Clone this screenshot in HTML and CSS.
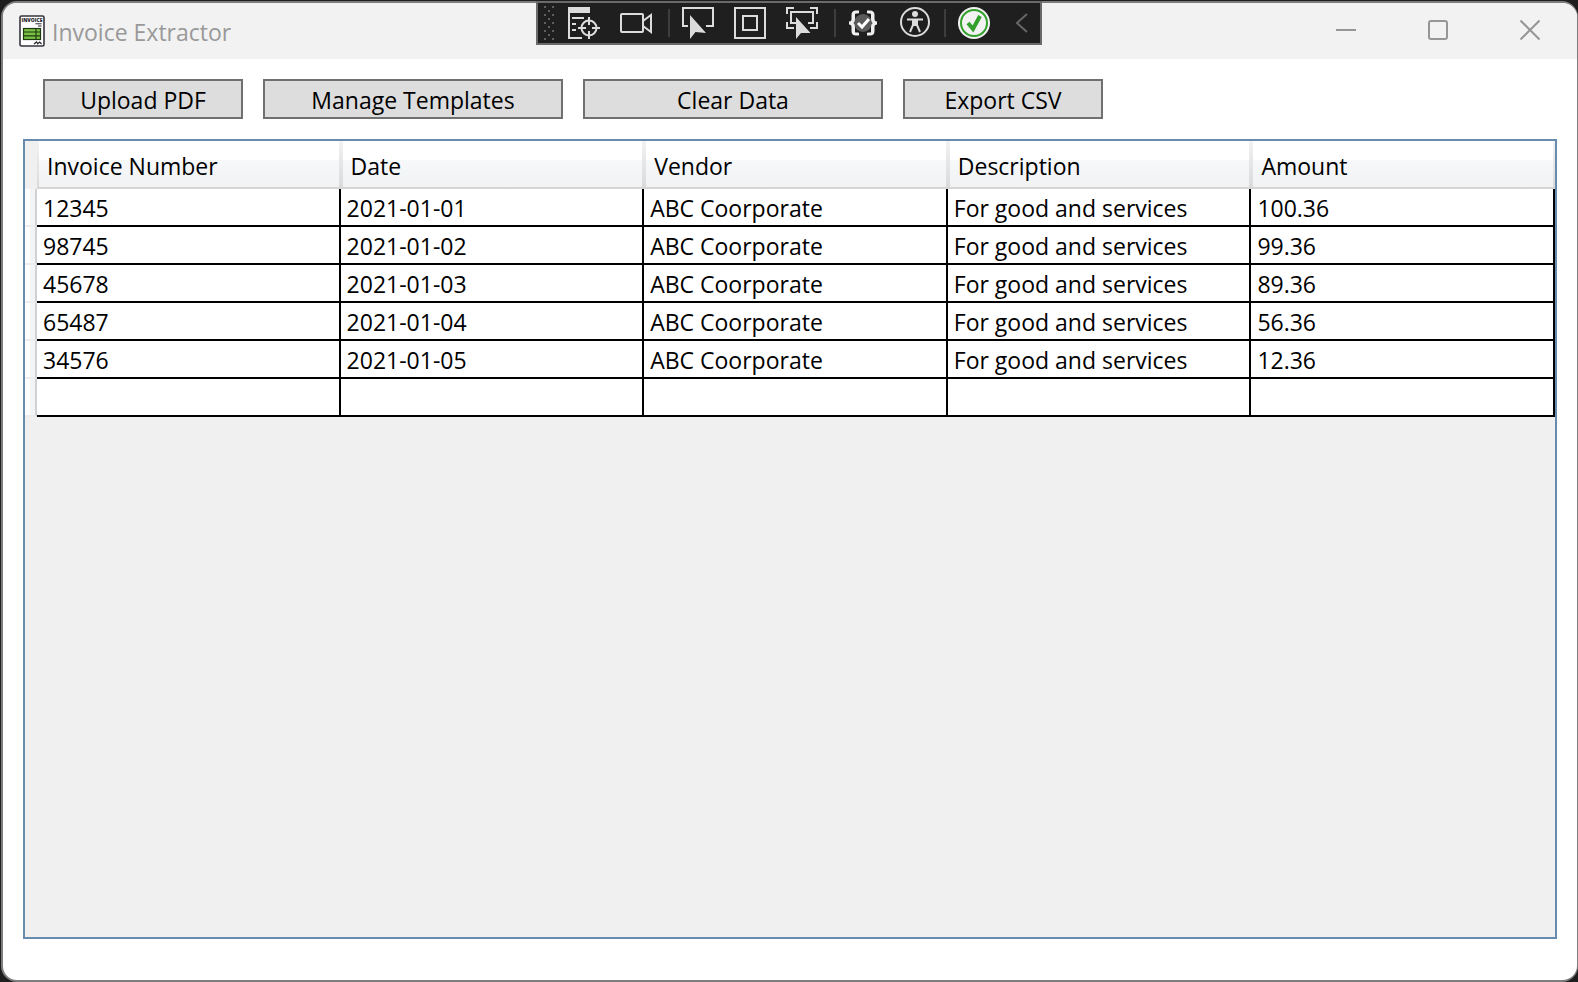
FILE: index.html
```html
<!DOCTYPE html>
<html lang="en">
<head>
<meta charset="utf-8">
<title>Invoice Extractor</title>
<link rel="stylesheet" href="styles.css">
</head>
<body>
<div class="window">
  <header class="titlebar">
    <svg class="app-icon" viewBox="0 0 26 32" aria-hidden="true">
      <rect x="1" y="1" width="24" height="30" rx="1.5" fill="#fff" stroke="#34343c" stroke-width="1.6"/>
      <text class="app-icon-text" x="13" y="6.500" text-anchor="middle">INVOICE</text>
      <path d="M16.500 8.800h6M19 11h3.500" stroke="#26262e"/>
      <rect x="4.500" y="13.500" width="17" height="11" fill="#7ac143" stroke="#1d3a12" stroke-width="1.200"/>
      <path d="M4 17h18M4 20.800h18M17 13v12" stroke="#1d3a12" stroke-width="1.200"/>
      <path d="M15 29l2.500-2 1.200 1.800 2-1.800 1.800 2" fill="none" stroke="#26262e" stroke-width="1.200"/>
    </svg>
    <h1 class="title">Invoice Extractor</h1>
    <div class="window-controls">
      <button class="window-button" type="button" aria-label="Minimize"><svg viewBox="0 0 20 20"><path d="M0 10h20"/></svg></button>
      <button class="window-button" type="button" aria-label="Maximize"><svg viewBox="0 0 20 20"><rect x="1" y="1" width="18" height="18" rx="2"/></svg></button>
      <button class="window-button" type="button" aria-label="Close"><svg viewBox="0 0 20 20"><path d="M.5.5l19 19M19.500.5l-19 19"/></svg></button>
    </div>
  </header>
  <main class="content">
    <div class="actions">
      <button class="action" type="button">Upload PDF</button>
      <button class="action action-wide" type="button">Manage Templates</button>
      <button class="action action-wide" type="button">Clear Data</button>
      <button class="action" type="button">Export CSV</button>
    </div>
    <div class="grid">
      <table class="invoices">
        <thead>
          <tr><td class="corner"></td><th scope="col">Invoice Number</th><th scope="col">Date</th><th scope="col">Vendor</th><th scope="col">Description</th><th scope="col">Amount</th></tr>
        </thead>
        <tbody>
          <tr><td class="row-head"></td><td>12345</td><td>2021-01-01</td><td>ABC Coorporate</td><td>For good and services</td><td>100.36</td></tr>
          <tr><td class="row-head"></td><td>98745</td><td>2021-01-02</td><td>ABC Coorporate</td><td>For good and services</td><td>99.36</td></tr>
          <tr><td class="row-head"></td><td>45678</td><td>2021-01-03</td><td>ABC Coorporate</td><td>For good and services</td><td>89.36</td></tr>
          <tr><td class="row-head"></td><td>65487</td><td>2021-01-04</td><td>ABC Coorporate</td><td>For good and services</td><td>56.36</td></tr>
          <tr><td class="row-head"></td><td>34576</td><td>2021-01-05</td><td>ABC Coorporate</td><td>For good and services</td><td>12.36</td></tr>
          <tr><td class="row-head"></td><td></td><td></td><td></td><td></td><td></td></tr>
        </tbody>
      </table>
    </div>
  </main>
</div>
<div class="debug-bar" role="toolbar" aria-label="Debug tools">
  <svg class="grip" viewBox="0 0 10 34" aria-hidden="true">
    <path d="M1 0v34M9 0v34" stroke="#5f5f5f" stroke-width="2" stroke-dasharray="2 6"/>
    <path d="M5 4v30" stroke="#5f5f5f" stroke-width="2" stroke-dasharray="2 6"/>
  </svg>
  <button class="tool" type="button" aria-label="Go to live visual tree"><svg viewBox="0 0 32 32">
    <path d="M0 0h22v6H0z" fill="#dcdcdc" stroke="none"/>
    <path d="M1 5v26h13M4 11h12M4 17h4M4 23h4"/>
    <circle cx="21" cy="21" r="7.500"/>
    <path d="M21 10v8M21 24v8M10 21h8M24 21h8"/>
  </svg></button>
  <button class="tool" type="button" aria-label="Record"><svg viewBox="0 0 32 32">
    <rect x="1" y="7" width="22" height="18" rx="1"/><path d="M23 14l8-6v17l-8-6"/>
  </svg></button>
  <span class="separator"></span>
  <button class="tool" type="button" aria-label="Select element"><svg viewBox="0 0 32 32">
    <path d="M6 19H1V1h30v18h-7"/><path class="solid" d="M8 8v24l5.500-7L24 26z"/>
  </svg></button>
  <button class="tool" type="button" aria-label="Display layout adorners"><svg viewBox="0 0 32 32">
    <rect x="1" y="1" width="30" height="30"/><rect x="9" y="9" width="14" height="14"/>
  </svg></button>
  <button class="tool" type="button" aria-label="Track focused element"><svg viewBox="0 0 32 32">
    <path d="M1 7V1h7M24 1h7v6M31 15v6h-7M1 15v6h7M10 16H5V5h22v11h-5"/><path class="solid" d="M10 10v22l5-6 9.500 0z"/>
  </svg></button>
  <span class="separator"></span>
  <button class="tool" type="button" aria-label="Binding failures"><svg viewBox="0 0 32 32">
    <path d="M11 5H8q-3 0-3 3v4q0 4-4 4 4 0 4 4v4q0 3 3 3h3M19 5h3q3 0 3 3v4q0 4 4 4-4 0-4 4v4q0 3-3 3h-3" stroke="#f0f0f0" stroke-width="3"/>
    <circle cx="15" cy="16" r="10.500" fill="#1f1f1f" stroke="none"/>
    <circle cx="15" cy="16" r="9" fill="#5a5a5a" stroke="none"/><path d="M10 16l4 4 7-8" stroke="#fff" stroke-width="3"/>
    <path d="M6 7v5q0 4-4 4 4 0 4 4v5M24 7v5q0 4 4 4-4 0-4 4v5" stroke="#f0f0f0" stroke-width="2"/>
  </svg></button>
  <button class="tool" type="button" aria-label="Scan for accessibility issues"><svg viewBox="0 0 32 32">
    <circle cx="15" cy="15" r="14"/><circle class="solid" cx="15" cy="7" r="3"/>
    <path d="M7 12.500h16M13 13v5l-3 7M17 13v5l3 7M13 18h4"/><path class="solid" d="M12 12h6v7h-6z"/>
  </svg></button>
  <span class="separator separator-near"></span>
  <button class="tool" type="button" aria-label="Hot reload is ready"><svg viewBox="0 0 32 32">
    <circle cx="16" cy="16" r="16" fill="#f2f2f2" stroke="none"/><circle cx="16" cy="16" r="13" stroke="#33a02c"/>
    <path d="M10 16l5 6 7-13" stroke="#33a02c" stroke-width="4"/>
  </svg></button>
  <button class="collapse" type="button" aria-label="Collapse toolbar"><svg viewBox="0 0 12 20"><path d="M11 1l-10 9 10 9"/></svg></button>
</div>
</body>
</html>
```

FILE: styles.css
```css
* {
  box-sizing: border-box;
}

body {
  margin: 0;
  min-height: 100vh;
  display: flex;
  padding: 1px 0 0 1px;
  background: #1e1e1e;
  color: #000;
  font-family: "Open Sans", "Noto Sans", sans-serif;
  font-size: 23px;
  line-height: 32px;
}

button {
  margin: 0;
  padding: 0;
  border: 0;
  background: none;
  color: inherit;
  font: inherit;
}

svg {
  display: block;
}

.window {
  flex: 1;
  display: flex;
  flex-direction: column;
  overflow: hidden;
  border: 2px solid #7d7d7d;
  border-right-width: 1px;
  border-radius: 16px;
  background: #fff;
}

.titlebar {
  display: flex;
  align-items: center;
  height: 56px;
  padding: 0 1px 0 16px;
  background: #f2f2f2;
}

.app-icon {
  width: 26px;
  height: 32px;
}

.app-icon-text {
  fill: #26262e;
  font-size: 5px;
  font-weight: 800;
}

.title {
  margin: 0 0 0 7px;
  padding-top: 2px;
  color: #999;
  font-size: 23px;
  font-weight: 400;
}

.window-controls {
  display: flex;
  margin-left: auto;
}

.window-button {
  display: flex;
  justify-content: center;
  width: 92px;
  padding: 17px 0 19px;
}

.window-button svg {
  width: 20px;
  height: 20px;
  fill: none;
  stroke: #969696;
  stroke-width: 2;
}

.content {
  flex: 1;
  display: flex;
  flex-direction: column;
  gap: 20px;
  padding: 20px 20px 41px;
}

.actions {
  display: flex;
  gap: 20px;
  padding-left: 20px;
}

.action {
  width: 200px;
  height: 40px;
  padding-top: 2px;
  border: 2px solid #707070;
  background: #ddd;
}

.action-wide {
  width: 300px;
}

.grid {
  flex: 1;
  border: 2px solid #688caf;
  background: #f0f0f0;
}

.invoices {
  width: 100%;
  table-layout: fixed;
  border-collapse: separate;
  border-spacing: 0;
}

.invoices th {
  height: 48px;
  padding: 4px 8px 0 10px;
  border-bottom: 2px solid #d5d5d5;
  background:
    linear-gradient(#f2f2f2, #d8dadc) left / 2px 100% no-repeat,
    linear-gradient(#f2f2f2, #d8dadc) right / 2px 100% no-repeat,
    linear-gradient(#fff 0 19px, #f7f8fa 19px, #f0f2f4);
  font-weight: 400;
  text-align: left;
}

.invoices td {
  height: 38px;
  padding: 2px 6px 0;
  border-right: 2px solid #000;
  border-bottom: 2px solid #000;
  background: #fff;
}

.invoices .corner {
  width: 12px;
  padding: 0;
  border: 0;
  background: #f0f0f0;
}

.invoices .row-head {
  padding: 0;
  border-right-color: #d0d1d3;
  border-bottom-color: #ececec;
  background: linear-gradient(90deg, #fff 0 5px, #f3f4f5 5px);
}

.debug-bar {
  position: absolute;
  top: 1px;
  left: 50%;
  transform: translateX(-50%);
  display: flex;
  align-items: center;
  width: 506px;
  height: 44px;
  padding: 0 12px 0 6px;
  border: 2px solid #6a6a6a;
  background: #1f1f1f;
}

.grip {
  width: 10px;
  height: 34px;
  margin-right: 14px;
}

.tool svg {
  width: 32px;
  height: 32px;
  fill: none;
  stroke: #dcdcdc;
  stroke-width: 2;
}

.tool .solid {
  fill: #dcdcdc;
  stroke: none;
}

.tool + .tool {
  margin-left: 20px;
}

.separator {
  width: 2px;
  height: 28px;
  margin: 0 12px 0 16px;
  background: #3d3d3d;
}

.separator-near {
  margin-left: 12px;
}

.collapse {
  margin-left: auto;
}

.collapse svg {
  width: 12px;
  height: 20px;
  fill: none;
  stroke: #666;
  stroke-width: 2;
}
```
